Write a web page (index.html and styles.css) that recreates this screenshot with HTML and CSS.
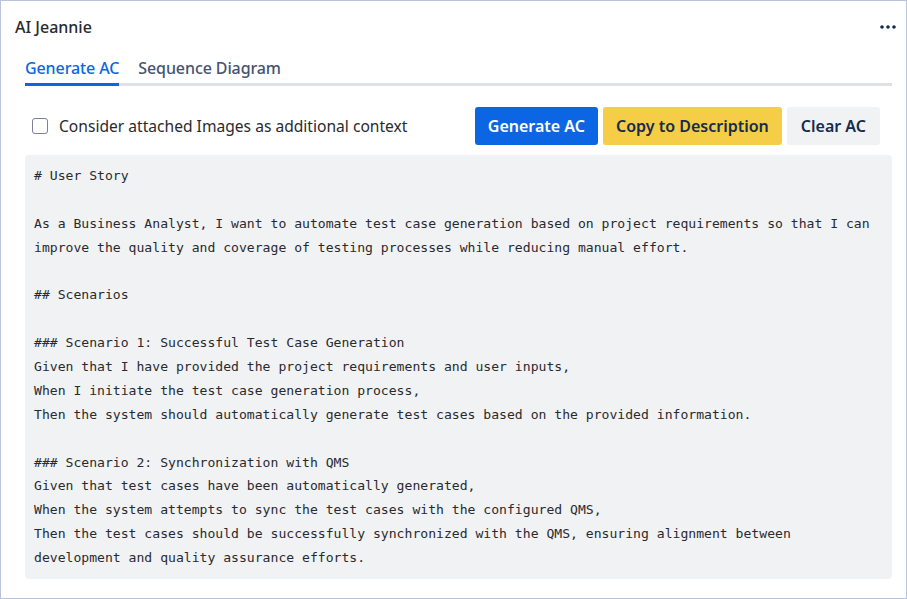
FILE: index.html
```html
<!DOCTYPE html>
<html lang="en">
<head>
<meta charset="utf-8">
<title>AI Jeannie</title>
<link rel="stylesheet" href="styles.css">
</head>
<body>
<div class="panel">
  <header class="header">
    <h1 class="title">AI Jeannie</h1>
    <button class="more" aria-label="More">
      <svg width="16" height="4" viewBox="0 0 16 4"><circle cx="2" cy="2" r="1.8"/><circle cx="8" cy="2" r="1.8"/><circle cx="14" cy="2" r="1.8"/></svg>
    </button>
  </header>
  <nav class="tabs">
    <div class="tab active">Generate AC</div>
    <div class="tab">Sequence Diagram</div>
  </nav>
  <div class="toolbar">
    <label class="check"><span class="box"></span>Consider attached Images as additional context</label>
    <div class="actions">
      <button class="btn primary">Generate AC</button>
      <button class="btn warning">Copy to Description</button>
      <button class="btn subtle">Clear AC</button>
    </div>
  </div>
  <pre class="output"># User Story

As a Business Analyst, I want to automate test case generation based on project requirements so that I can
improve the quality and coverage of testing processes while reducing manual effort.

## Scenarios

### Scenario 1: Successful Test Case Generation
Given that I have provided the project requirements and user inputs,
When I initiate the test case generation process,
Then the system should automatically generate test cases based on the provided information.

### Scenario 2: Synchronization with QMS
Given that test cases have been automatically generated,
When the system attempts to sync the test cases with the configured QMS,
Then the test cases should be successfully synchronized with the QMS, ensuring alignment between
development and quality assurance efforts.</pre>
</div>
</body>
</html>
```
FILE: styles.css
```css
* { box-sizing: border-box; }
html, body { margin: 0; padding: 0; background: #fff; }
body {
  font-family: "Segoe UI", "Noto Sans", "Open Sans", sans-serif;
  color: #172b4d;
}
.panel {
  width: 907px;
  height: 599px;
  border: 1px solid #b9c3dc;
  padding: 0 14px 0 24px;
  display: flex;
  flex-direction: column;
}
.header {
  display: flex;
  align-items: center;
  justify-content: space-between;
  height: 52px;
  margin-left: -10px;
}
.title {
  margin: 0;
  font-size: 16px;
  font-weight: 500;
  color: #292a2e;
}
.more {
  border: 0;
  background: none;
  padding: 0;
  margin-right: -4px;
  display: flex;
  fill: #172b4d;
}
.tabs {
  display: flex;
  gap: 19px;
  border-bottom: 3px solid #dfe1e6;
  height: 33px;
}
.tab {
  font-size: 16px;
  font-weight: 500;
  color: #44546f;
  line-height: 30px;
  height: 33px;
  margin-bottom: -3px;
  border-bottom: 3px solid transparent;
  letter-spacing: -0.1px;
}
.tab.active {
  color: #0c66e4;
  border-bottom-color: #0c66e4;
}
.toolbar {
  display: flex;
  align-items: center;
  justify-content: space-between;
  margin-top: 21px;
  padding-right: 12px;
}
.check {
  display: flex;
  align-items: center;
  gap: 11px;
  font-size: 15.6px;
  color: #292a2e;
  padding-left: 7px;
}
.box {
  width: 16px;
  height: 16px;
  border: 1.5px solid #7a8296;
  border-radius: 3px;
  background: #fff;
}
.actions {
  display: flex;
  gap: 5px;
}
.btn {
  font-family: inherit;
  font-size: 16px;
  font-weight: 600;
  height: 38px;
  border: 0;
  border-radius: 3px;
  padding: 0 13px;
  color: #172b4d;
}
.btn.primary { background: #0c66e4; color: #fff; }
.btn.warning { background: #f5cd47; }
.btn.subtle { background: #f1f2f4; padding: 0 14px; }
.output {
  margin: 10px 0 0 0;
  background: #f1f2f4;
  border-radius: 4px;
  padding: 9px 9px 9px;
  font-family: "DejaVu Sans Mono", "Liberation Mono", monospace;
  font-size: 13.1px;
  line-height: 23.875px;
  color: #292a2e;
  white-space: pre;
  overflow: hidden;
}
```
